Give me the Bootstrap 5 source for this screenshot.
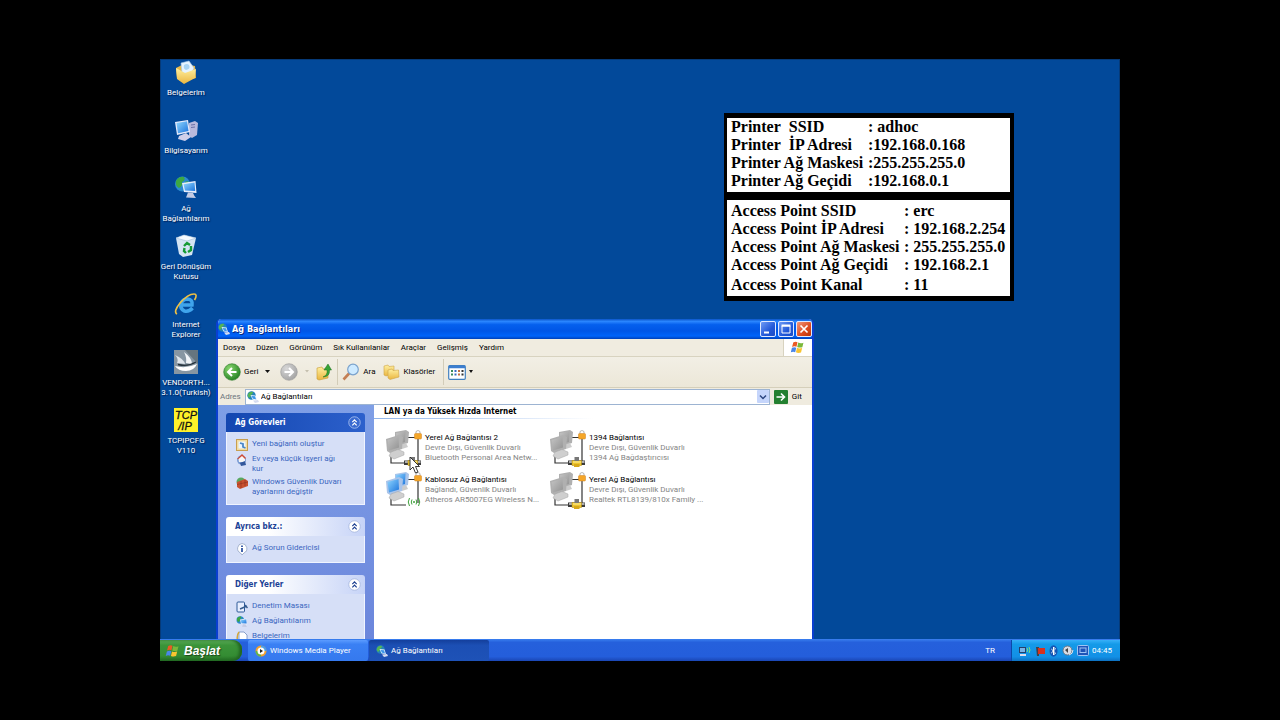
<!DOCTYPE html>
<html lang="tr">
<head>
<meta charset="utf-8">
<meta name="viewport" content="width=device-width, initial-scale=1">
<title>Ağ Bağlantıları</title>
<link href="https://cdn.jsdelivr.net/npm/bootstrap@5.3.0/dist/css/bootstrap.min.css" rel="stylesheet">
<style>
  body { background: #000; color: #000; font: 8px/10px Roboto, sans-serif; padding: 59px 12.5% 59px; }
  svg { display: block; flex: none; }
  button, input { font: inherit; color: inherit; border: 0; padding: 0; background: none; }
  ul, h1, h2, h3, p { margin: 0; padding: 0; list-style: none; font: inherit; }
  a { color: inherit; text-decoration: none; }
  .heavy { font-family: "DejaVu Sans Condensed", "DejaVu Sans", sans-serif; font-weight: 700; }
  .desktop { background: #02499a; border: solid #063a78; border-width: 1px 1px 0; }
  .shortcuts { width: 50px; }
  .shortcut { height: 58px; color: #fff; text-align: center; text-shadow: 1px 1px 1px #001c50; gap: 4px; white-space: nowrap; }

  .info { top: 53px; right: 105px; width: 290px; background: #000; padding: 5px 4px 5px 3px; gap: 8px; font: 700 16px/18px "Liberation Serif", serif; }
  .info table { background: #fff; width: 100%; white-space: nowrap; }
  .info td { padding: 0 0 0 4px; }
  .info td + td { padding: 0; }
  .info tr:last-child td { padding-bottom: 2px; }
  .info .first-col { width: 141px; }
  .info .wide-col { width: 177px; }
  .info .roomy td { padding-top: 2px; }

  .xp-window { left: 55px; top: 259px; bottom: 0; width: 62.4%; border: solid #0a3fd0; border-width: 0 2px; border-radius: 5px 5px 0 0; overflow: hidden; background: #efebdf; }
  .titlebar { height: 20px; color: #fff; background: linear-gradient(#0a54c8, #2a86ff 12%, #0560ee 28%, #0056e6 60%, #0064fa 85%, #0040b8); gap: 2px; text-shadow: 1px 1px 0 #0a2a80; }
  .titlebar .heavy { font-size: 9px; }
  .captions { gap: 2px; }
  .capbtn { width: 16px; height: 16px; border: 1px solid #dfe9ff; border-radius: 2px; background: linear-gradient(135deg, #6f9bf5, #2258d8 60%, #1c4cc4); }
  .capbtn-close { background: linear-gradient(135deg, #f0987c, #dc4a20 60%, #b83408); }
  .menubar { height: 18px; border-bottom: 1px solid #d8d3c0; padding-left: 5px; background: #f0ece0; }
  .menubar ul { gap: 11px; }
  .brand-cell { width: 29px; background: #fff; border-left: 1px solid #d8d3c0; }
  .toolbar { height: 31px; padding-left: 5px; background: linear-gradient(#f2efe5, #ece7d8); border-bottom: 1px solid #d5cfba; }
  .toolbar button { gap: 3px; }
  .sep { width: 1px; height: 26px; background: #d2ccb8; }
  .addressbar { height: 17px; gap: 4px; padding: 0 10px 0 2px; }
  .addr { height: 16px; background: #fff; border: 1px solid #9db4d2; gap: 2px; padding-left: 1px; }
  .addr input { outline: 0; min-width: 0; }
  .drop { width: 12px; height: 13px; background: #c5d5fb; border-radius: 1px; }
  .sidepane { width: 156px; background: linear-gradient(#7f9fe6, #6b86dc); padding: 8px 9px 0 8px; gap: 12px; overflow: hidden; }
  .taskbox-head { height: 19px; padding: 0 4px 0 9px; border-radius: 3px 3px 0 0; color: #1c4296; background: linear-gradient(90deg, #fff 30%, #c6d3f7); }
  .taskbox-main .taskbox-head { color: #fff; background: linear-gradient(90deg, #1447b0, #2c60cc); }
  .taskbox-body { background: #d6dff7; border: 1px solid #f0f4ff; border-top: 0; color: #3a66c0; padding: 7px 8px 7px 9px; gap: 3px; }
  .taskbox-body li a { gap: 4px; }
  .content-pane { background: #fff; }
  .group-title { padding: 2px 0 0 10px; height: 13px; }
  .group-rule { height: 1px; width: 50%; background: linear-gradient(90deg, #90b4ea, #fff); }
  .conns { padding: 10px 0 0 12px; display: grid; grid-template-columns: 164px 164px; grid-auto-rows: 42px; }
  .conn { gap: 3px; white-space: nowrap; color: #858585; }
  .conn h3 { color: #000; padding-top: 4px; }
  .pointer { left: 23px; top: 27px; }

  .taskbar { height: 22px; padding-top: 1px; color: #fff; background: linear-gradient(#3a80f0, #2560dc 15%, #245edb 80%, #1a46b4); white-space: nowrap; }
  .start { width: 82px; padding-left: 5px; gap: 4px; border-radius: 0 9px 9px 0; background: linear-gradient(#5bab58, #3b9439 25%, #348c33 75%, #226a22); box-shadow: inset -3px 0 3px #226622; font: italic 700 12px/16px "Liberation Sans", sans-serif; text-shadow: 1px 1px 1px #1a4418; }
  .taskbtns { gap: 1px; padding-left: 6px; }
  .taskbtn { width: 120px; border-radius: 2px; padding-left: 7px; gap: 3px; background: linear-gradient(#5c9cff, #3a80f4 20%, #3579ee); }
  .taskbtn-active { background: linear-gradient(#143f9c, #1c4fb4 25%, #1e52b7); }
  .tray { width: 109px; padding: 0 8px 0 7px; background: linear-gradient(#38b0f8, #149ae8 20%, #1290e6 80%, #0d70c0); border-left: 1px solid #0b4aa8; }
</style>
</head>
<body class="vh-100 d-flex flex-column">

<svg width="0" height="0" class="position-absolute" aria-hidden="true">
  <defs>
    <linearGradient id="gScreen" x1="0" y1="0" x2="1" y2="1"><stop offset="0" stop-color="#8fd6ff"/><stop offset="1" stop-color="#1c74dc"/></linearGradient>
    <linearGradient id="gGrey" x1="0" y1="0" x2="1" y2="1"><stop offset="0" stop-color="#c4c4c4"/><stop offset="1" stop-color="#929292"/></linearGradient>
    <linearGradient id="gFolder" x1="0" y1="0" x2="0" y2="1"><stop offset="0" stop-color="#fff0a0"/><stop offset="1" stop-color="#eab640"/></linearGradient>
    <radialGradient id="gGreen" cx=".35" cy=".3" r=".8"><stop offset="0" stop-color="#8ad870"/><stop offset="1" stop-color="#1c7a1c"/></radialGradient>
    <radialGradient id="gDull" cx=".35" cy=".3" r=".8"><stop offset="0" stop-color="#d8d8d8"/><stop offset="1" stop-color="#a0a0a0"/></radialGradient>
  </defs>
  <symbol id="flag" viewBox="0 0 16 14">
    <path d="M3.4 1.6Q6 .2 8 1.4L6.9 6.2Q4.6 5.2 2.2 6.5Z" fill="#ea5a24"/>
    <path d="M8.8 1.7Q11.4 3 14.4 1.8L13.2 6.6Q10.4 7.7 7.7 6.4Z" fill="#7ab83a"/>
    <path d="M2 7.4Q4.4 6.2 6.7 7.2L5.5 12Q3.2 11 .8 12.2Z" fill="#4a86e8"/>
    <path d="M7.5 7.4Q10 8.6 13 7.5L11.8 12.3Q9 13.4 6.3 12.2Z" fill="#f8c430"/>
  </symbol>
  <symbol id="globe-pc" viewBox="0 0 24 24">
    <circle cx="8.500" cy="8" r="7.500" fill="#2a8ad0"/>
    <path d="M2 5Q5 0 10 1Q12 4 8 6Q9 10 5 12Q1 10 2 5ZM11 6Q15 4 15.500 8Q13 11 11 9Z" fill="#3da843"/>
    <path d="M8 7L21.500 5L22.500 17L10 16Z" fill="#e8eefc"/>
    <path d="M9.500 8.300L20.500 6.600L21.200 15L11 14.500Z" fill="url(#gScreen)"/>
    <path d="M14 16.500L19 17L20.500 20L22 22L12 21.500Z" fill="#c4cbe4"/>
  </symbol>
  <symbol id="globe-link" viewBox="0 0 12 12">
    <circle cx="4.500" cy="4.500" r="4.200" fill="#2583b8"/>
    <path d="M1 3Q3 0 6 1Q6 3 4 4Q4 6 2 7Q0 5 1 3Z" fill="#55b455"/>
    <path d="M3.500 4L8.500 4.500L10 9L5.500 8.500Z" fill="#dff0ff"/><path d="M4.500 5L8 5.300L9 8.200L6 7.800Z" fill="#3c96ea"/>
    <path d="M6 9.500L11 9L12 11L8 12Z" fill="#d5dcf0"/>
  </symbol>
  <symbol id="chev" viewBox="0 0 12 12"><circle cx="6" cy="6" r="5.300" fill="#fff" stroke="#a8b8e0" stroke-width=".8"/><path d="M4 5.600L6 3.600L8 5.600M4 8.600L6 6.600L8 8.600" fill="none" stroke="#1c3f90" stroke-width="1.100"/></symbol>
  <symbol id="chev-dark" viewBox="0 0 12 12"><circle cx="6" cy="6" r="5.300" fill="#3a6ad0" stroke="#a8c0f0" stroke-width=".8"/><path d="M4 5.600L6 3.600L8 5.600M4 8.600L6 6.600L8 8.600" fill="none" stroke="#fff" stroke-width="1.100"/></symbol>
  <symbol id="pcs" viewBox="0 0 36 38">
    <path d="M5 27V34H20M22 8.500H32V32" fill="none" stroke="#333" stroke-width="1.200"/>
    <path d="M9 3L20 1L23 3L22 14L12 17L9 15Z" fill="var(--edge)"/><path d="M10 4L19.500 2.500L19 13L11 15Z" fill="var(--scr)"/>
    <path d="M14 16L20 14L22 18L16 20Z" fill="#ccc"/>
    <path d="M0 10L13 6L17 8L16 20L4 24L1 22Z" fill="var(--edge)"/><path d="M1.500 11L12.500 8L13 18.500L3 21.500Z" fill="var(--scr)"/>
    <path d="M5 23L12 20.500L18 23V26L8 30L3 27Z" fill="#cfcfcf" stroke="#a5a5a5" stroke-width=".5"/>
    <path d="M30 4.500V3Q32 0 34 3V4.500" fill="none" stroke="#bbb" stroke-width="1.200"/><rect x="28.500" y="4.500" width="7" height="5.500" rx="1" fill="#f5a628" stroke="#cf8020" stroke-width=".5"/>
  </symbol>
  <symbol id="plug" viewBox="0 0 36 38"><path d="M18 31.500H35V36H18Z" fill="#3c3c3c"/><path d="M19 33H34.500" stroke="#d5d5d5" stroke-width="1.400"/><path d="M22 31.500H31.500V36.500H22Z" fill="#ecc52c" stroke="#ad8510" stroke-width=".5"/><path d="M24.500 28H29V32H24.500Z" fill="#777"/><path d="M24 35H29.500V38H24Z" fill="#d8a818"/><path d="M23 33H31" stroke="#fff0a0"/></symbol>
</svg>

<main class="desktop position-relative flex-grow-1 overflow-hidden">
  <ul class="shortcuts">
    <li><a href="#" class="shortcut d-flex flex-column align-items-center">
      <svg width="24" height="24" viewBox="0 0 24 24"><path d="M2 8L10 4L21 6L22 18L8 22L3 18Z" fill="#e8b848"/><path d="M7 3L15 1L20 8L17 14L8 13Z" fill="#e6f4ff" stroke="#a4c8e8" stroke-width=".6"/><path d="M10 5Q13 3 15 5Q17 9 12 10Q9 9 10 5Z" fill="#a8d4f4"/><path d="M2 8L11 13L22 9L21 18L10 24L3 19Z" fill="url(#gFolder)"/></svg>
      <span>Belgelerim</span></a></li>
    <li><a href="#" class="shortcut d-flex flex-column align-items-center">
      <svg width="24" height="24" viewBox="0 0 24 24"><path d="M15 5L21 3L24 5L23 17L18 20L15 18Z" fill="#b8b9dc"/><path d="M17 7L21 6.500M17 9.500L21 9" stroke="#6b70a8"/><path d="M1 4L14 2L16 14L3 17Z" fill="#e4eafc"/><path d="M2.500 5L13 3.300L14.500 13L4 15.300Z" fill="url(#gScreen)"/><path d="M5 18L12 15L17 19L11 23L4 21Z" fill="#d0d0ea"/></svg>
      <span>Bilgisayarım</span></a></li>
    <li><a href="#" class="shortcut d-flex flex-column align-items-center">
      <svg width="24" height="24"><use href="#globe-pc"/></svg>
      <span>Ağ<br>Bağlantılarım</span></a></li>
    <li><a href="#" class="shortcut d-flex flex-column align-items-center">
      <svg width="24" height="24" viewBox="0 0 24 24"><path d="M2 4L10 1L22 4L18 21L9 23L5 20Z" fill="#d4e4f4"/><path d="M2 4L10 1L22 4L13 7Z" fill="#f6fbff" stroke="#a4c0dc" stroke-width=".6"/><path d="M10 12L13 9L16 11M17 12V16L14 18M12 19L10 17L10.500 14" fill="none" stroke="#159a35" stroke-width="2.400"/></svg>
      <span>Geri Dönüşüm<br>Kutusu</span></a></li>
    <li><a href="#" class="shortcut d-flex flex-column align-items-center">
      <svg width="24" height="24" viewBox="0 0 24 24"><path d="M18.500 16Q15 20 10.500 19Q6 17 7 12Q8.500 7 13.500 7Q19 7.500 18 13H8" fill="none" stroke="#3fa4ec" stroke-width="3.600"/><path d="M3 22Q-1 20 6 11Q14 2 20 2Q24 2 20.500 8" fill="none" stroke="#efc044" stroke-width="1.600"/></svg>
      <span>Internet<br>Explorer</span></a></li>
    <li><a href="#" class="shortcut d-flex flex-column align-items-center">
      <svg width="24" height="24" viewBox="0 0 24 24"><rect width="24" height="24" fill="#66757f"/><path d="M0 0H11L24 14V24H0Z" fill="#8796a2"/><path d="M10 2Q18 8 18 14L12 13Q13 8 10 2Z" fill="#f2f5f8"/><path d="M1 5Q10 9 11 14L3 13Q5 9 1 5Z" fill="#dfe6ec"/><path d="M1 16Q12 19 23 14Q20 21 12 21Q4 21 1 16Z" fill="#fff"/><path d="M4 14.500Q14 17 22 12" fill="none" stroke="#26333c" stroke-width="1.400"/></svg>
      <span>VENDORTH...<br>3.1.0(Turkish)</span></a></li>
    <li><a href="#" class="shortcut d-flex flex-column align-items-center">
      <svg width="24" height="24" viewBox="0 0 24 24"><rect width="24" height="24" fill="#fff12a"/><g font-family="Liberation Sans, sans-serif" font-style="italic" font-weight="400" font-size="11" fill="#111" stroke="#111" stroke-width=".3" style="text-shadow:none"><text x="12" y="11" text-anchor="middle">TCP</text><text x="11" y="22" text-anchor="middle">/IP</text></g></svg>
      <span>TCPIPCFG<br>V110</span></a></li>
  </ul>

  <section class="info position-absolute d-flex flex-column">
    <table>
      <tr><td class="first-col">Printer&nbsp; SSID</td><td>: adhoc</td></tr>
      <tr><td>Printer&nbsp; İP Adresi</td><td>:192.168.0.168</td></tr>
      <tr><td>Printer Ağ Maskesi</td><td>:255.255.255.0</td></tr>
      <tr><td>Printer Ağ Geçidi</td><td>:192.168.0.1</td></tr>
    </table>
    <table>
      <tr class="roomy"><td class="wide-col">Access Point SSID</td><td>: erc</td></tr>
      <tr><td>Access Point İP Adresi</td><td>: 192.168.2.254</td></tr>
      <tr><td>Access Point Ağ Maskesi</td><td>: 255.255.255.0</td></tr>
      <tr><td>Access Point Ağ Geçidi</td><td>: 192.168.2.1</td></tr>
      <tr class="roomy"><td>Access Point Kanal</td><td>: 11</td></tr>
    </table>
  </section>

  <section class="xp-window position-absolute d-flex flex-column">
    <header class="titlebar d-flex align-items-center flex-shrink-0">
      <svg width="12" height="12"><use href="#globe-link"/></svg>
      <h1 class="heavy me-auto">Ağ Bağlantıları</h1>
      <div class="captions d-flex">
        <button class="capbtn" aria-label="Simge durumuna küçült"><svg width="14" height="14"><path d="M3 10.500H8" stroke="#fff" stroke-width="2"/></svg></button>
        <button class="capbtn" aria-label="Ekranı kapla"><svg width="14" height="14"><path d="M3 4H11V11H3Z" fill="none" stroke="#fff"/><path d="M2.500 3.500H11.500" stroke="#fff" stroke-width="2"/></svg></button>
        <button class="capbtn capbtn-close" aria-label="Kapat"><svg width="14" height="14"><path d="M3.500 3.500L10.500 10.500M10.500 3.500L3.500 10.500" stroke="#fff" stroke-width="1.700"/></svg></button>
      </div>
    </header>
    <nav class="menubar d-flex justify-content-between flex-shrink-0">
      <ul class="d-flex align-items-center">
        <li><a href="#">Dosya</a></li><li><a href="#">Düzen</a></li><li><a href="#">Görünüm</a></li><li><a href="#">Sık Kullanılanlar</a></li><li><a href="#">Araçlar</a></li><li><a href="#">Gelişmiş</a></li><li><a href="#">Yardım</a></li>
      </ul>
      <div class="brand-cell d-flex align-items-center justify-content-center"><svg width="15" height="13"><use href="#flag"/></svg></div>
    </nav>
    <div class="toolbar d-flex align-items-center flex-shrink-0">
      <button class="d-flex align-items-center"><svg width="18" height="18" viewBox="0 0 18 18"><circle cx="9" cy="9" r="8.300" fill="url(#gGreen)" stroke="#2e7a2a" stroke-width=".6"/><path d="M13.500 9H5.500M9 5L5 9L9 13" fill="none" stroke="#fff" stroke-width="2"/></svg>Geri
        <svg width="11" height="6"><path d="M4 1H9L6.500 4Z" fill="#111"/></svg></button>
      <button class="d-flex align-items-center ms-2" aria-label="İleri"><svg width="18" height="18" viewBox="0 0 18 18"><circle cx="9" cy="9" r="8.300" fill="url(#gDull)" stroke="#999" stroke-width=".6"/><path d="M4.500 9H12.500M9 5L13 9L9 13" fill="none" stroke="#fff" stroke-width="2"/></svg>
        <svg width="10" height="6"><path d="M4 1H8L6 3.500Z" fill="#c4bfae"/></svg></button>
      <button class="ms-1 me-1" aria-label="Yukarı"><svg width="18" height="18" viewBox="0 0 18 18"><path d="M2 5L7 4L8 6L13 5.500V15L4 17L2 16Z" fill="url(#gFolder)" stroke="#c89a34" stroke-width=".6"/><path d="M8 14Q13 12 12 7H9L13 1L16.500 7H14.500Q15 14 8 14Z" fill="#36a436" stroke="#1a6f1f" stroke-width=".5"/></svg></button>
      <i class="sep"></i>
      <button class="d-flex align-items-center ms-1"><svg width="18" height="18" viewBox="0 0 18 18"><path d="M7.500 10L1.500 16.500" stroke="#c47f54" stroke-width="2.600"/><circle cx="11" cy="6.500" r="5.300" fill="#cdeaff" stroke="#7aa2cc" stroke-width="1.200"/></svg>Ara</button>
      <button class="d-flex align-items-center ms-2 me-2"><svg width="17" height="18" viewBox="0 0 17 18"><path d="M1 3L5 2L6 3.500L11 3V11L3 13L1 12Z" fill="url(#gFolder)" stroke="#cfa548" stroke-width=".6"/><path d="M5 7L9 6L10 7.500L15.500 7L16 14L7 16.500L5 15Z" fill="url(#gFolder)" stroke="#cfa548" stroke-width=".6"/></svg>Klasörler</button>
      <i class="sep"></i>
      <button class="d-flex align-items-center ms-1" aria-label="Görünümler"><svg width="18" height="15" viewBox="0 0 18 15"><rect x=".7" y=".7" width="16.600" height="13.600" rx="1" fill="#fff" stroke="#3f7fc0" stroke-width="1.200"/><path d="M1 2H17" stroke="#3c7ed0" stroke-width="2.400"/><g stroke-width="2" stroke-dasharray="2 1.500"><path d="M4 5V12" stroke="#3a8a5a"/><path d="M7.500 5V12" stroke="#3a6ac4"/><path d="M11 5V12" stroke="#c07040"/><path d="M14.500 5V12" stroke="#333"/></g></svg>
        <svg width="5" height="6"><path d="M0 1H4L2 4Z" fill="#111"/></svg></button>
    </div>
    <div class="addressbar d-flex align-items-center flex-shrink-0">
      <label for="adres" class="text-secondary">Adres</label>
      <div class="addr d-flex align-items-center flex-grow-1">
        <svg width="12" height="12"><use href="#globe-link"/></svg>
        <input id="adres" class="flex-grow-1" type="text" value="Ağ Bağlantıları">
        <button class="drop d-flex align-items-center justify-content-center" aria-label="Adres listesi"><svg width="8" height="6"><path d="M1 1.500L4 4.500L7 1.500" fill="none" stroke="#2c4680" stroke-width="1.500"/></svg></button>
      </div>
      <button class="d-flex align-items-center gap-1"><svg width="14" height="14"><rect width="14" height="14" rx="1" fill="#238030"/><path d="M2.500 7H10.500M7 3.500L10.500 7L7 10.500" fill="none" stroke="#fff" stroke-width="1.600"/></svg>Git</button>
    </div>
    <div class="d-flex flex-grow-1 overflow-hidden">
      <aside class="sidepane d-flex flex-column flex-shrink-0">
        <section class="taskbox-main">
          <h2 class="taskbox-head heavy d-flex align-items-center justify-content-between">Ağ Görevleri <svg width="13" height="13"><use href="#chev-dark"/></svg></h2>
          <ul class="taskbox-body d-flex flex-column">
            <li><a href="#" class="d-flex"><svg width="12" height="12"><rect x=".5" y=".5" width="11" height="11" fill="#f2dca0" stroke="#c89f50"/><rect x="2.500" y="2.500" width="7" height="7" fill="#e8f4ff"/><path d="M4 4L7 5V8L9.500 9" stroke="#4a86c8" stroke-width="1.800" fill="none"/></svg>Yeni bağlantı oluştur</a></li>
            <li><a href="#" class="d-flex"><svg width="12" height="12"><circle cx="5.500" cy="6" r="4.500" fill="#7a9bd4"/><path d="M1 5L6 0L10 4L8 6Z" fill="#ce4a34"/><path d="M2.500 5L6 2L9 5V8H3Z" fill="#f6f6f6"/><path d="M4 9L9 7L10 11L5 12Z" fill="#33589c"/></svg>Ev veya küçük işyeri ağı<br>kur</a></li>
            <li><a href="#" class="d-flex"><svg width="12" height="12"><circle cx="5" cy="5" r="4.500" fill="#59a860"/><path d="M1 5L9 2L12 4V9L4 12L1 10Z" fill="#c85130"/><path d="M1 7.500L12 5M5 4V11M9 3V9" stroke="#8d2f1c" stroke-width=".6"/></svg>Windows Güvenlik Duvarı<br>ayarlarını değiştir</a></li>
          </ul>
        </section>
        <section>
          <h2 class="taskbox-head heavy d-flex align-items-center justify-content-between">Ayrıca bkz.: <svg width="13" height="13"><use href="#chev"/></svg></h2>
          <ul class="taskbox-body">
            <li><a href="#" class="d-flex"><svg width="12" height="12"><path d="M6 .5A5 5 0 0 1 8 10L6 12L4.500 10A5 5 0 0 1 6 .5Z" fill="#fff" stroke="#93a4c4" stroke-width=".8"/><path d="M6 2.500V4M6 5V9" stroke="#163f98" stroke-width="1.600"/></svg>Ağ Sorun Gidericisi</a></li>
          </ul>
        </section>
        <section>
          <h2 class="taskbox-head heavy d-flex align-items-center justify-content-between">Diğer Yerler <svg width="13" height="13"><use href="#chev"/></svg></h2>
          <ul class="taskbox-body d-flex flex-column">
            <li><a href="#" class="d-flex"><svg width="12" height="12"><rect x="1" y="1" width="7.500" height="10" rx="1" fill="#e8efff" stroke="#2f5a98"/><path d="M4 8L11 5M9 4L11.500 7" stroke="#355b8e" stroke-width="1.400"/></svg>Denetim Masası</a></li>
            <li><a href="#" class="d-flex"><svg width="12" height="12"><use href="#globe-pc"/></svg>Ağ Bağlantılarım</a></li>
            <li><a href="#" class="d-flex"><svg width="12" height="12"><path d="M3 1H8L11 4V11H3Z" fill="#fff" stroke="#6f8bc0" stroke-width=".8"/><path d="M3 1Q0 5 2 11" fill="none" stroke="#d5a83c" stroke-width="1.500"/></svg>Belgelerim</a></li>
          </ul>
        </section>
      </aside>
      <section class="content-pane flex-grow-1">
        <h2 class="group-title heavy">LAN ya da Yüksek Hızda Internet</h2>
        <div class="group-rule"></div>
        <div class="conns">
          <article class="conn d-flex position-relative" style="--scr:url(#gGrey);--edge:#b0b0b0"><svg width="36" height="38"><use href="#pcs"/><use href="#plug"/></svg><div><h3>Yerel Ağ Bağlantısı 2</h3><p>Devre Dışı, Güvenlik Duvarlı</p><p>Bluetooth Personal Area Netw...</p></div>
            <svg class="pointer position-absolute" width="12" height="18"><path d="M1 1V14L4 11L6.500 17L9 16L6.500 10.500H10.500Z" fill="#fff" stroke="#222" stroke-width=".9"/></svg></article>
          <article class="conn d-flex" style="--scr:url(#gGrey);--edge:#b0b0b0"><svg width="36" height="38"><use href="#pcs"/><use href="#plug"/></svg><div><h3>1394 Bağlantısı</h3><p>Devre Dışı, Güvenlik Duvarlı</p><p>1394 Ağ Bağdaştırıcısı</p></div></article>
          <article class="conn d-flex" style="--scr:url(#gScreen);--edge:#a9c4ea"><svg width="36" height="38"><use href="#pcs"/><g fill="none" stroke="#3fa23c"><path d="M26 28.500Q24.500 31 26 33.500M23.500 27Q21 31 23.500 35M30 28.500Q31.500 31 30 33.500M32.500 27Q35 31 32.500 35"/></g><circle cx="28" cy="31" r="1" fill="#3fa23c"/></svg><div><h3>Kablosuz Ağ Bağlantısı</h3><p>Bağlandı, Güvenlik Duvarlı</p><p>Atheros AR5007EG Wireless N...</p></div></article>
          <article class="conn d-flex" style="--scr:url(#gGrey);--edge:#b0b0b0"><svg width="36" height="38"><use href="#pcs"/><use href="#plug"/></svg><div><h3>Yerel Ağ Bağlantısı</h3><p>Devre Dışı, Güvenlik Duvarlı</p><p>Realtek RTL8139/810x Family ...</p></div></article>
        </div>
      </section>
    </div>
  </section>
</main>

<footer class="taskbar d-flex flex-shrink-0">
  <button class="start d-flex align-items-center"><svg width="15" height="14"><use href="#flag"/></svg>Başlat</button>
  <div class="taskbtns d-flex">
    <button class="taskbtn d-flex align-items-center"><svg width="12" height="12"><circle cx="6" cy="6" r="5.500" fill="#f0a030"/><path d="M6 .5A5.500 5.500 0 0 1 11.500 6H6Z" fill="#4aa0e8"/><path d="M.5 6A5.500 5.500 0 0 0 6 11.500V6Z" fill="#63b448"/><circle cx="6" cy="6" r="3.500" fill="#fff"/><path d="M5 4L8 6L5 8Z" fill="#222"/></svg>Windows Media Player</button>
    <button class="taskbtn taskbtn-active d-flex align-items-center"><svg width="12" height="12"><use href="#globe-link"/></svg>Ağ Bağlantıları</button>
  </div>
  <div class="d-flex align-items-center ms-auto me-3">TR</div>
  <div class="tray d-flex align-items-center justify-content-between">
    <svg width="13" height="12"><path d="M0 2H7V8H0Z" fill="#24406c"/><path d="M1 3H6V7H1Z" fill="#79b4e8"/><path d="M1 10H7" stroke="#dde" stroke-width="2"/><path d="M8 3Q9.500 5 8 7M10 2Q12 5 10 8" fill="none" stroke="#7be07a"/></svg>
    <svg width="11" height="12"><path d="M1 2H4V11H2Z" fill="#40404c"/><path d="M3 3H10V9H3Z" fill="#d8321e"/></svg>
    <svg width="9" height="12"><ellipse cx="4.500" cy="6" rx="4" ry="5.700" fill="#1556b4"/><path d="M2.300 4L6.500 8L4.500 10V2L6.500 4L2.300 8" fill="none" stroke="#fff"/></svg>
    <svg width="12" height="12"><circle cx="5.500" cy="5.500" r="4.500" fill="#d8dce4" stroke="#6b7684"/><path d="M3 5L6 3V8Z" fill="#444"/><path d="M7 10Q11 9 11 5" fill="none" stroke="#e0e6f0"/></svg>
    <svg width="12" height="12"><rect x=".5" y=".5" width="11" height="10" rx="1" fill="#1f54b8" stroke="#9fc4f4"/><rect x="3" y="3" width="6" height="4.500" fill="none" stroke="#9fc4f4"/></svg>
    <time>04:45</time>
  </div>
</footer>
<script src="https://cdn.jsdelivr.net/npm/bootstrap@5.3.0/dist/js/bootstrap.bundle.min.js"></script>
</body>
</html>
